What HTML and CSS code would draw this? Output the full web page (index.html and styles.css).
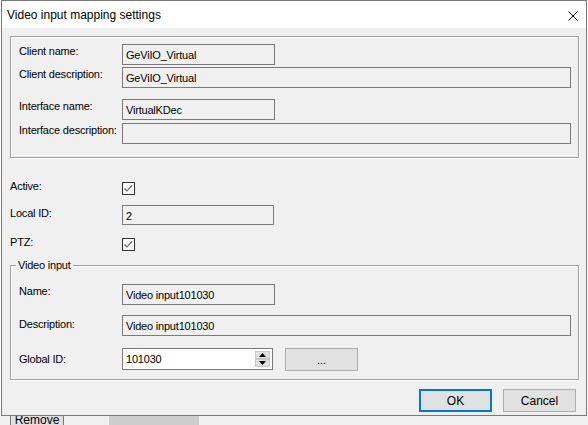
FILE: index.html
```html
<!DOCTYPE html>
<html>
<head>
<meta charset="utf-8">
<link rel="stylesheet" href="styles.css">
</head>
<body>
<div class="window">
  <div class="titlebar">
    <span class="title">Video input mapping settings</span>
    <svg class="close" width="10" height="10" viewBox="0 0 10 10"><path d="M0.5 0.5 L9.5 9.5 M9.5 0.5 L0.5 9.5" stroke="#000" stroke-width="1" fill="none"/></svg>
  </div>
  <div class="content">
    <div class="group g1">
      <div class="row"><span class="lbl">Client name:</span><div class="field short">GeViIO_Virtual</div></div>
      <div class="row gap2"><span class="lbl">Client description:</span><div class="field wide">GeViIO_Virtual</div></div>
      <div class="row gap11"><span class="lbl">Interface name:</span><div class="field short">VirtualKDec</div></div>
      <div class="row gap3"><span class="lbl">Interface description:</span><div class="field wide"></div></div>
    </div>

    <div class="crow active"><span class="olbl">Active:</span>
      <svg class="chk" width="13" height="13" viewBox="0 0 13 13"><rect x="0.5" y="0.5" width="12" height="12" fill="#fff" stroke="#333"/><path d="M2.5 6.5 L5 9 L10 3.5" fill="none" stroke="#6d6d6d" stroke-width="1.2"/></svg>
    </div>
    <div class="row localid"><span class="olbl lid">Local ID:</span><div class="field lidf">2</div></div>
    <div class="crow ptz"><span class="olbl">PTZ:</span>
      <svg class="chk" width="13" height="13" viewBox="0 0 13 13"><rect x="0.5" y="0.5" width="12" height="12" fill="#fff" stroke="#333"/><path d="M2.5 6.5 L5 9 L10 3.5" fill="none" stroke="#6d6d6d" stroke-width="1.2"/></svg>
    </div>

    <fieldset class="group g2">
      <legend>Video input</legend>
      <div class="row"><span class="lbl">Name:</span><div class="field short">Video input101030</div></div>
      <div class="row gap10"><span class="lbl dlbl">Description:</span><div class="field wide">Video input101030</div></div>
      <div class="row gid"><span class="lbl glbl">Global ID:</span>
        <div class="spin"><span class="spinval">101030</span>
          <div class="spinbtns">
            <div class="sb"><svg width="7" height="4" viewBox="0 0 7 4"><path d="M3.5 0 L7 4 L0 4 Z" fill="#000"/></svg></div>
            <div class="sb"><svg width="7" height="4" viewBox="0 0 7 4"><path d="M0 0 L7 0 L3.5 4 Z" fill="#000"/></svg></div>
          </div>
        </div>
        <button class="btn dots">...</button>
      </div>
    </fieldset>

    <div class="buttons">
      <button class="btn ok">OK</button>
      <button class="btn">Cancel</button>
    </div>
  </div>
</div>
<div class="under">
  <div class="remove">Remove</div>
  <div class="bar"></div>
</div>
</body>
</html>
```
FILE: styles.css
```css
html, body {
  margin: 0;
  padding: 0;
}
body {
  width: 588px;
  height: 425px;
  overflow: hidden;
  background: #ffffff;
  font-family: "Liberation Sans", Arial, sans-serif;
  font-size: 11px;
  letter-spacing: -0.2px;
  color: #000;
}
.window {
  margin-left: 1px;
  width: 586px;
  height: 416px;
  box-sizing: border-box;
  border: 1px solid #7a7a7a;
  background: #f0f0f0;
}
.titlebar {
  height: 27px;
  background: #ffffff;
  display: flex;
  align-items: center;
  justify-content: space-between;
  padding: 0 8px 0 5px;
}
.title {
  font-size: 12px;
  letter-spacing: 0;
  line-height: 27px;
  padding-top: 1px;
}
.close {
  display: block;
  margin-top: 2px;
}
.content {
  padding: 8px 7px 0 8px;
}
.group {
  border: 1px solid #a0a0a0;
  box-shadow: inset 1px 1px 0 #ffffff, 1px 1px 0 #ffffff;
}
.g1 {
  padding: 7px 7px 13px 8px;
}
.row {
  display: flex;
  height: 21px;
}
.gap2 { margin-top: 2px; }
.gap3 { margin-top: 3px; }
.gap11 { margin-top: 11px; }
.gap10 { margin-top: 10px; }
.lbl {
  width: 103px;
  flex: none;
  line-height: 15px;
  white-space: nowrap;
}
.olbl {
  width: 112px;
  flex: none;
  line-height: 15px;
  white-space: nowrap;
}
.field {
  box-sizing: border-box;
  height: 21px;
  border: 1px solid #7a7a7a;
  background: #f0f0f0;
  padding: 3px 3px 0;
  line-height: 15px;
  white-space: nowrap;
  overflow: hidden;
}
.short { width: 153px; }
.wide { flex: 1; }
.crow {
  display: flex;
  height: 13px;
}
.crow .olbl { margin-top: -3px; }
.chk { display: block; }
.active { margin-top: 24px; }
.localid { margin-top: 10px; height: 20px; }
.lid { padding-top: 1px; }
.lidf { width: 152px; height: 20px; }
.ptz { margin-top: 13px; }

.g2 {
  margin: 8px 0 0;
  min-width: 0;
  padding: 12px 7px 8px 8px;
}
.g2 legend {
  padding: 0 2px;
  margin-left: -3px;
  line-height: 13px;
  font-size: 11px;
}
.dlbl { padding-top: 2px; }
.gid {
  margin-top: 12px;
  height: 23px;
}
.glbl { padding-top: 4px; }
.spin {
  box-sizing: border-box;
  width: 151px;
  height: 22px;
  border: 1px solid #7a7a7a;
  background: #ffffff;
  display: flex;
  justify-content: space-between;
  padding: 0 2px 0 3px;
}
.spinval {
  line-height: 15px;
  padding-top: 3px;
}
.spinbtns {
  margin-top: 2px;
  width: 15px;
  height: 16px;
  display: flex;
  flex-direction: column;
}
.sb {
  flex: 1;
  box-sizing: border-box;
  border: 1px solid #c8c8c8;
  background: #e1e1e1;
  display: flex;
  align-items: center;
  justify-content: center;
}
.sb svg { display: block; }
.btn {
  box-sizing: border-box;
  width: 73px;
  height: 23px;
  margin: 0;
  padding: 0;
  border: 1px solid #adadad;
  background: #e1e1e1;
  font-family: "Liberation Sans", Arial, sans-serif;
  font-size: 12px;
  letter-spacing: 0;
  color: #000;
}
.dots {
  margin-left: 12px;
  font-size: 11px;
}
.buttons {
  display: flex;
  justify-content: flex-end;
  gap: 11px;
  margin-top: 9px;
  margin-right: 3px;
}
.ok {
  border: 2px solid #0078d7;
}
.under {
  display: flex;
  align-items: flex-start;
  height: 9px;
  overflow: hidden;
  background: #f0f0f0;
}
.remove {
  margin-left: 10px;
  width: 54px;
  height: 20px;
  box-sizing: border-box;
  border-left: 1px solid #7a7a7a;
  border-right: 1px solid #7a7a7a;
  background: #e1e1e1;
  text-align: center;
  line-height: 12px;
  margin-top: -2px;
  font-size: 12px;
  letter-spacing: 0;
}
.bar {
  margin-left: 45px;
  width: 90px;
  height: 9px;
  background: #cdcdcd;
}
```
